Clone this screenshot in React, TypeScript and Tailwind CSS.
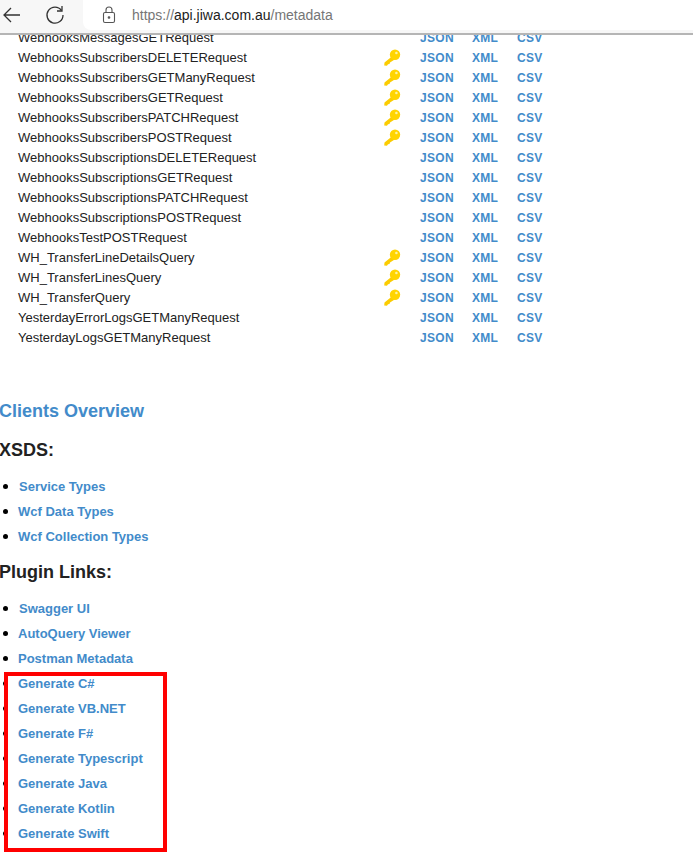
import React from 'react';

const operations = [
  { name: 'WebhooksMessagesGETRequest', key: false },
  { name: 'WebhooksSubscribersDELETERequest', key: true },
  { name: 'WebhooksSubscribersGETManyRequest', key: true },
  { name: 'WebhooksSubscribersGETRequest', key: true },
  { name: 'WebhooksSubscribersPATCHRequest', key: true },
  { name: 'WebhooksSubscribersPOSTRequest', key: true },
  { name: 'WebhooksSubscriptionsDELETERequest', key: false },
  { name: 'WebhooksSubscriptionsGETRequest', key: false },
  { name: 'WebhooksSubscriptionsPATCHRequest', key: false },
  { name: 'WebhooksSubscriptionsPOSTRequest', key: false },
  { name: 'WebhooksTestPOSTRequest', key: false },
  { name: 'WH_TransferLineDetailsQuery', key: true },
  { name: 'WH_TransferLinesQuery', key: true },
  { name: 'WH_TransferQuery', key: true },
  { name: 'YesterdayErrorLogsGETManyRequest', key: false },
  { name: 'YesterdayLogsGETManyRequest', key: false },
];

const xsds = [
  { label: 'Service Types', indent: 'pl-[19px]' },
  { label: 'Wcf Data Types', indent: 'pl-[18px]' },
  { label: 'Wcf Collection Types', indent: 'pl-[18px]' },
];

const plugins = [
  { label: 'Swagger UI', indent: 'pl-[19px]' },
  { label: 'AutoQuery Viewer', indent: 'pl-[18px]' },
  { label: 'Postman Metadata', indent: 'pl-[18px]' },
  { label: 'Generate C#', indent: 'pl-[18px]' },
  { label: 'Generate VB.NET', indent: 'pl-[18px]' },
  { label: 'Generate F#', indent: 'pl-[18px]' },
  { label: 'Generate Typescript', indent: 'pl-[18px]' },
  { label: 'Generate Java', indent: 'pl-[18px]' },
  { label: 'Generate Kotlin', indent: 'pl-[18px]' },
  { label: 'Generate Swift', indent: 'pl-[18px]' },
];

function KeyIcon() {
  return (
    <svg width="18" height="18" viewBox="0 0 18 18" className="block">
      <path d="M9.5 7 L1.5 13.5 L1.2 16.6 L4 16.8 L5 15.3 L6.5 15 L7 13.5 L12.5 10 Z" fill="#fbcc00" />
      <circle cx="12" cy="5.8" r="5.2" fill="#ffd400" />
      <circle cx="13.4" cy="4" r="1.3" fill="#fff3a0" />
    </svg>
  );
}

function LinkList({ items }: { items: { label: string; indent: string }[] }) {
  return (
    <ul>
      {items.map((item) => (
        <li key={item.label} className={`relative h-[25px] leading-[25px] text-[13px] font-bold text-[#428bca] ${item.indent}`}>
          <span className="absolute left-[3px] top-[10px] h-[5px] w-[5px] rounded-full bg-black" />
          {item.label}
        </li>
      ))}
    </ul>
  );
}

export default function App() {
  return (
    <div className="relative h-[860px] w-[693px] overflow-hidden bg-white font-['Liberation_Sans',Arial,sans-serif]">
      <header className="relative z-10 flex h-[35px] items-start border-b-2 border-[#b5b5b5] bg-[#f7f7f7]">
        <svg width="20" height="18" viewBox="0 0 20 18" fill="none" stroke="#333" strokeWidth="1.3" className="ml-[2px] mt-[6px]">
          <path d="M18 9 H2 M9 2 L2 9 L9 16" />
        </svg>
        <svg width="20" height="20" viewBox="0 0 20 20" fill="none" stroke="#333" strokeWidth="1.3" className="ml-[23px] mt-[5px]">
          <path d="M16.5 5.5 A8 8 0 1 0 18 10" />
          <path d="M17 1 V6 H12" />
        </svg>
        <div className="ml-[18px] flex h-[30px] flex-1 items-center rounded-bl-lg bg-white pl-[18px]">
          <svg width="16" height="18" viewBox="0 0 16 18" fill="none" stroke="#555" strokeWidth="1.1">
            <rect x="2.5" y="6.5" width="11" height="10" rx="1.5" />
            <path d="M5 6.5 V4 A3 3 0 0 1 11 4 V6.5" />
            <circle cx="8" cy="11.5" r="0.8" fill="#555" />
          </svg>
          <span className="ml-[15px] text-[14px] text-[#767676]">
            https://<span className="text-[#222]">api.jiwa.com.au</span>/metadata
          </span>
        </div>
      </header>

      <main className="-mt-[7px]">
        <div>
          {operations.map((op) => (
            <div key={op.name} className="flex h-5 items-center text-[13px] leading-5 text-[#222]">
              <div className="w-[383px] shrink-0 pl-[18px]">{op.name}</div>
              <div className="w-[37px] shrink-0">{op.key && <KeyIcon />}</div>
              <div className="flex text-[12px] font-bold tracking-[0.3px] text-[#428bca]">
                <span className="w-[52px]">JSON</span>
                <span className="w-[45px]">XML</span>
                <span>CSV</span>
              </div>
            </div>
          ))}
        </div>

        <h2 className="-ml-px mt-[50px] h-[26px] text-[18px] font-bold leading-[26px] text-[#428bca]">Clients Overview</h2>
        <h3 className="-ml-px mt-[13px] h-[26px] text-[18px] font-bold leading-[26px] text-[#222]">XSDS:</h3>
        <div className="mt-[11px]">
          <LinkList items={xsds} />
        </div>
        <h3 className="-ml-px mt-[10px] h-[26px] text-[18px] font-bold leading-[26px] text-[#222]">Plugin Links:</h3>
        <div className="mt-[11px]">
          <LinkList items={plugins} />
        </div>
      </main>

      <div className="absolute left-[4px] top-[672px] h-[180px] w-[163px] border-4 border-[#ff0000]" />
    </div>
  );
}
